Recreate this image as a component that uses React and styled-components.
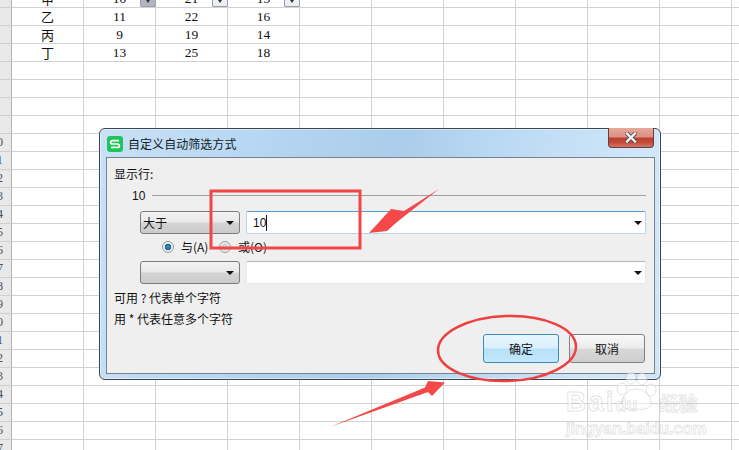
import React from "react";
import styled, { createGlobalStyle } from "styled-components";

const Global = createGlobalStyle`
  html, body { margin: 0; padding: 0; background: #fff; }
  body { font-family: "Liberation Sans", "Noto Sans CJK SC", sans-serif; }
`;

const Page = styled.div`
  position: relative;
  width: 739px;
  height: 450px;
  overflow: hidden;
  background: #fff;
`;

const Sheet = styled.div`
  margin-top: -10px;
  display: flex;
  flex-direction: column;
`;

const Row = styled.div`
  display: grid;
  grid-template-columns: 12px repeat(11, 72px);
  height: 18px;
`;

const RowHead = styled.div`
  box-sizing: border-box;
  display: flex;
  align-items: center;
  overflow: hidden;
  background: #e9e9e9;
  border-right: 1px solid #b4b4b4;
  border-bottom: 1px solid #cfcfcf;
  font: 12px/17px "Liberation Serif", serif;
  color: #44505c;
  white-space: nowrap;
`;

const RowNumber = styled.span`
  flex: 0 0 24px;
  margin-left: -15px;
  text-align: center;
`;

const Cell = styled.div`
  position: relative;
  box-sizing: border-box;
  display: flex;
  align-items: center;
  justify-content: center;
  overflow: visible;
  border-right: 1px solid #d2d2d2;
  border-bottom: 1px solid #d2d2d2;
  color: #111;
  font: ${(p) => (p.$cjk ? '13px/16px "Noto Sans CJK SC"' : '13.5px/16px "Liberation Serif"')}, serif;
`;

const FilterButton = styled.span`
  position: absolute;
  right: -1px;
  bottom: 0;
  box-sizing: border-box;
  width: 16px;
  height: 16px;
  display: flex;
  align-items: flex-end;
  justify-content: center;
  padding-bottom: 3px;
  background: ${(p) => (p.$active ? "#b3b6bf" : "#eceef2")};
  border: 1px solid #9a9eb0;
  border-radius: 1px;
  &::after {
    content: "";
    border-left: 2px solid transparent;
    border-right: 2px solid transparent;
    border-top: 3px solid #333;
  }
`;

const Dialog = styled.div`
  position: absolute;
  left: 99px;
  top: 128px;
  box-sizing: border-box;
  width: 562px;
  height: 252px;
  display: flex;
  flex-direction: column;
  padding: 0 5px 5px 6px;
  border: 1px solid #3c4650;
  border-radius: 6px;
  background: linear-gradient(100deg, #c9e1f6 0%, #b4d5f1 30%, #a9cdea 50%, #b9d8f2 65%, #d0e6fa 90%, #cfe5fa 100%);
  box-shadow: inset 0 0 0 1px rgba(255, 255, 255, 0.45);
`;

const TitleBar = styled.div`
  position: relative;
  height: 28px;
  display: flex;
  align-items: center;
  gap: 6px;
  margin-left: 1px;
  padding-top: 1px;
  box-sizing: border-box;
  font: 12px/16px "Noto Sans CJK SC", sans-serif;
  letter-spacing: 0.05px;
  color: #111a24;
`;

const TitleText = styled.span`
  margin-left: -1px;
`;

const CloseButton = styled.div`
  position: absolute;
  right: 1px;
  top: -1px;
  width: 46px;
  height: 20px;
  box-sizing: border-box;
  display: flex;
  align-items: center;
  justify-content: center;
  border: 1px solid #6b3a3a;
  border-top: none;
  border-radius: 0 0 4px 4px;
  background: linear-gradient(#e7a89c 0%, #dc9184 45%, #bf3f30 55%, #c24a3a 75%, #d47866 100%);
`;

const Panel = styled.div`
  flex: 1;
  display: flex;
  flex-direction: column;
  padding: 8px 8px 0 7px;
  background: #efefef;
  border: 1px solid #75828f;
  font: 12px/16px "Noto Sans CJK SC", sans-serif;
  color: #111;
`;

const TextLine = styled.div`
  height: 16px;
  margin-top: ${(p) => p.$top || 0}px;
`;

const GroupLine = styled.div`
  display: flex;
  align-items: center;
  gap: 7px;
  height: 16px;
  margin-top: 6px;
  padding-left: 18px;
  font-family: "Liberation Sans", sans-serif;
  &::after {
    content: "";
    flex: 1;
    height: 1px;
    margin-top: -2px;
    background: #a0a0a0;
  }
`;

const FieldRow = styled.div`
  display: flex;
  gap: 6px;
  height: 23px;
  margin-top: ${(p) => p.$top}px;
  padding-left: 26px;
`;

const Select = styled.div`
  position: relative;
  box-sizing: border-box;
  width: 100px;
  padding-left: 2px;
  display: flex;
  align-items: center;
  border: 1px solid #7d7d7d;
  border-radius: 3px;
  background: linear-gradient(#f3f3f3 0%, #e9e9e9 48%, #d4d4d4 52%, #cbcbcb 100%);
`;

const Caret = styled.span`
  position: absolute;
  right: ${(p) => p.$right}px;
  top: 9px;
  border-left: 4px solid transparent;
  border-right: 4px solid transparent;
  border-top: 4px solid #111;
`;

const Input = styled.div`
  position: relative;
  flex: 1;
  box-sizing: border-box;
  display: flex;
  align-items: center;
  padding-left: 6px;
  background: #fff;
  border: 1px solid ${(p) => (p.$focus ? "#b9d6ec" : "#e3e8f0")};
  border-top-color: ${(p) => (p.$focus ? "#5f9bc9" : "#b4b4bc")};
  border-radius: 2px;
  font-family: "Liberation Sans", sans-serif;
`;

const TextCaret = styled.span`
  width: 1px;
  height: 16px;
  background: #111;
`;

const RadioRow = styled.div`
  display: flex;
  align-items: center;
  height: 16px;
  margin-top: 5px;
  padding-left: 48px;
`;

const RadioOption = styled.label`
  display: flex;
  align-items: center;
  gap: 7px;
  min-width: 57px;
  color: #111;
`;

const Radio = styled.span`
  box-sizing: border-box;
  width: 12px;
  height: 12px;
  border-radius: 50%;
  border: 1px solid #9a9a9a;
  background: ${(p) =>
    p.$checked
      ? "radial-gradient(circle, #2f7fb6 0 2.2px, #16557f 3px, #f2f2f2 3.6px)"
      : "radial-gradient(circle, #d4d4d4 0 3px, #ececec 4px)"};
`;

const ButtonRow = styled.div`
  display: flex;
  justify-content: flex-end;
  gap: 10px;
  height: 29px;
  margin: 7px 1px 0 0;
`;

const Button = styled.div`
  box-sizing: border-box;
  width: 76px;
  display: flex;
  align-items: center;
  justify-content: center;
  border-radius: 3px;
  border: 1px solid ${(p) => (p.$primary ? "#3c8ab8" : "#808080")};
  background: ${(p) =>
    p.$primary
      ? "linear-gradient(#e9f7fe 0%, #d9effc 48%, #b6e1f8 52%, #c2e7fb 100%)"
      : "linear-gradient(#f8f8f8 0%, #ececec 48%, #d7d7d7 52%, #cfcfcf 100%)"};
  color: #111;
`;

const Annotations = styled.svg`
  position: absolute;
  left: 0;
  top: 0;
  pointer-events: none;
`;

const Watermark = styled.div`
  position: absolute;
  left: 566px;
  top: 387px;
  width: 140px;
  display: flex;
  flex-direction: column;
  color: rgba(255, 255, 255, 0.6);
  -webkit-text-stroke: 1px rgba(185, 185, 185, 0.38);
  font-family: "Liberation Sans", sans-serif;
  font-weight: 700;
`;

const Paw = styled.svg`
  position: absolute;
  left: 48px;
  top: -15px;
`;

const MarkTop = styled.div`
  position: relative;
  display: flex;
  align-items: baseline;
  height: 30px;
  font-size: 28px;
  line-height: 30px;
  letter-spacing: 2px;
`;

const MarkDu = styled.span`
  position: relative;
  font-size: 18px;
  letter-spacing: 0;
  width: 44px;
`;

const MarkCn = styled.span`
  position: relative;
  font: 700 19px/30px "Noto Sans CJK SC", sans-serif;
  letter-spacing: 0;
`;

const MarkUrl = styled.div`
  margin-top: 3px;
  font-size: 16px;
  line-height: 18px;
  white-space: nowrap;
`;

const data = [
  ["甲", "10", "21", "15"],
  ["乙", "11", "22", "16"],
  ["丙", "9", "19", "14"],
  ["丁", "13", "25", "18"],
];

const rows = Array.from({ length: 26 }, (_, i) => i + 2);
const columns = Array.from({ length: 11 }, (_, i) => i);

function SheetGrid() {
  return (
    <Sheet>
      {rows.map((n, r) => (
        <Row key={n}>
          <RowHead>
            <RowNumber>{n}</RowNumber>
          </RowHead>
          {columns.map((c) => (
            <Cell key={c} $cjk={c === 0}>
              {data[r] ? data[r][c] : ""}
              {r === 0 && c > 0 && c < 4 && <FilterButton $active={c === 1} />}
            </Cell>
          ))}
        </Row>
      ))}
    </Sheet>
  );
}

function LogoS() {
  return (
    <svg width="16" height="16" viewBox="0 0 16 16">
      <rect width="16" height="16" rx="3" fill="#1fc45b" />
      <path d="M12 4.6H5.6Q3.6 4.6 3.6 6.3T5.6 8H10.4Q12.4 8 12.4 9.7T10.4 11.4H4" fill="none" stroke="#fff" strokeWidth="1.7" />
    </svg>
  );
}

function CloseX() {
  return (
    <svg width="12" height="11" viewBox="0 0 12 11">
      <path d="M2 1.5L10 9.5M10 1.5L2 9.5" stroke="#4a4a4a" strokeWidth="4" strokeLinecap="square" />
      <path d="M2 1.5L10 9.5M10 1.5L2 9.5" stroke="#f4f4f4" strokeWidth="2.4" strokeLinecap="square" />
    </svg>
  );
}

export default function App() {
  return (
    <Page>
      <Global />
      <SheetGrid />
      <Dialog>
        <TitleBar>
          <LogoS />
          <TitleText>自定义自动筛选方式</TitleText>
          <CloseButton>
            <CloseX />
          </CloseButton>
        </TitleBar>
        <Panel>
          <TextLine>显示行:</TextLine>
          <GroupLine>10</GroupLine>
          <FieldRow $top={7}>
            <Select>
              大于
              <Caret $right={5} />
            </Select>
            <Input $focus>
              10
              <TextCaret />
              <Caret $right={3} />
            </Input>
          </FieldRow>
          <RadioRow>
            <RadioOption>
              <Radio $checked />
              与(A)
            </RadioOption>
            <RadioOption>
              <Radio />
              或(O)
            </RadioOption>
          </RadioRow>
          <FieldRow $top={6}>
            <Select>
              <Caret $right={5} />
            </Select>
            <Input>
              <Caret $right={3} />
            </Input>
          </FieldRow>
          <TextLine $top={6}>可用 ? 代表单个字符</TextLine>
          <TextLine $top={5}>用 * 代表任意多个字符</TextLine>
          <ButtonRow>
            <Button $primary>确定</Button>
            <Button>取消</Button>
          </ButtonRow>
        </Panel>
      </Dialog>
      <Annotations width="739" height="450" viewBox="0 0 739 450">
        <rect x="211" y="191" width="149" height="57" fill="none" stroke="#f24545" strokeWidth="3" />
        <ellipse cx="507" cy="348.5" rx="69" ry="32.5" fill="none" stroke="#ee4040" strokeWidth="2.5" transform="rotate(-2 507 348.5)" />
        <polygon points="439,189 404,211 391,209 369,233 387,231 397,222" fill="#f54848" />
        <polygon points="330,427 425,387.5 428,381 445,382.5 432,396 428,392" fill="#f54848" />
      </Annotations>
      <Watermark>
        <MarkTop>
          <Paw width="50" height="50" viewBox="0 0 50 50">
            <g fill="rgba(255,255,255,0.55)" stroke="rgba(185,185,185,0.4)">
              <ellipse cx="8" cy="17" rx="5" ry="6" />
              <ellipse cx="17" cy="6" rx="5" ry="6" />
              <ellipse cx="28" cy="7" rx="5" ry="6" />
              <ellipse cx="37" cy="18" rx="5" ry="6" />
              <path d="M22 17C14 17 8 24 8 31C8 37 14 38 22 37C30 38 37 37 37 31C37 24 30 17 22 17Z" />
            </g>
          </Paw>
          Bai
          <MarkDu>du</MarkDu>
          <MarkCn>经验</MarkCn>
        </MarkTop>
        <MarkUrl>jingyan.baidu.com</MarkUrl>
      </Watermark>
    </Page>
  );
}
